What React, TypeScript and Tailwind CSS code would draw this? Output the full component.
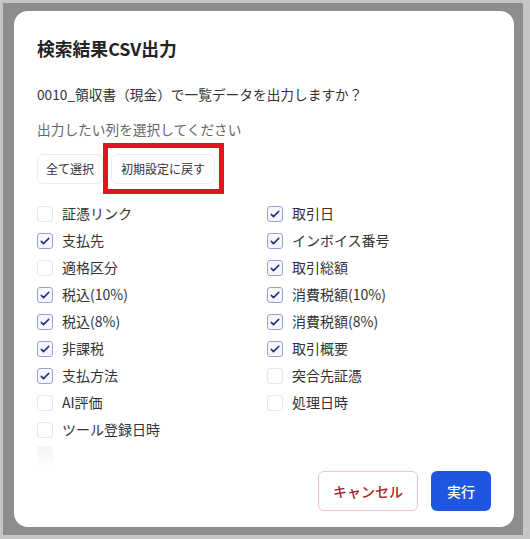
import React, { useState } from 'react';

interface ColumnOption {
  key: string;
  label: string;
  defaultOn: boolean;
}

const LEFT: ColumnOption[] = [
  { key: 'voucher', label: '証憑リンク', defaultOn: false },
  { key: 'payee', label: '支払先', defaultOn: true },
  { key: 'qualified', label: '適格区分', defaultOn: false },
  { key: 'tax10', label: '税込(10%)', defaultOn: true },
  { key: 'tax8', label: '税込(8%)', defaultOn: true },
  { key: 'nontax', label: '非課税', defaultOn: true },
  { key: 'method', label: '支払方法', defaultOn: true },
  { key: 'ai', label: 'AI評価', defaultOn: false },
  { key: 'registered', label: 'ツール登録日時', defaultOn: false },
];

const RIGHT: ColumnOption[] = [
  { key: 'date', label: '取引日', defaultOn: true },
  { key: 'invoice', label: 'インボイス番号', defaultOn: true },
  { key: 'total', label: '取引総額', defaultOn: true },
  { key: 'ctax10', label: '消費税額(10%)', defaultOn: true },
  { key: 'ctax8', label: '消費税額(8%)', defaultOn: true },
  { key: 'summary', label: '取引概要', defaultOn: true },
  { key: 'matched', label: '突合先証憑', defaultOn: false },
  { key: 'processed', label: '処理日時', defaultOn: false },
];

const defaults = (): Record<string, boolean> => {
  const result: Record<string, boolean> = {};
  [...LEFT, ...RIGHT].forEach((o) => {
    result[o.key] = o.defaultOn;
  });
  return result;
};

const CheckRow: React.FC<{ option: ColumnOption; checked: boolean; onToggle: () => void }> = ({
  option,
  checked,
  onToggle,
}) => (
  <label className="flex items-center gap-[9px] h-[27px] cursor-pointer select-none">
    <input type="checkbox" checked={checked} onChange={onToggle} className="sr-only" />
    <span
      className={
        checked
          ? 'w-4 h-4 rounded-[3px] border border-[#9aa0d6] bg-[#f5f6ff] flex items-center justify-center'
          : 'w-4 h-4 rounded-[3px] border border-[#e6e6e6] bg-white'
      }
    >
      {checked && (
        <svg viewBox="0 0 16 16" className="w-3 h-3">
          <path d="M3 8.5l3 3 7-7" fill="none" stroke="#25306e" strokeWidth="2" strokeLinecap="round" strokeLinejoin="round" />
        </svg>
      )}
    </span>
    <span className="text-[14px] text-[#333]">{option.label}</span>
  </label>
);

export default function App() {
  const [selected, setSelected] = useState<Record<string, boolean>>(defaults);

  const toggle = (key: string) => setSelected({ ...selected, [key]: !selected[key] });

  const selectAll = () => {
    const all: Record<string, boolean> = {};
    [...LEFT, ...RIGHT].forEach((o) => {
      all[o.key] = true;
    });
    setSelected(all);
  };

  return (
    <div
      className="w-[530px] h-[539px] bg-[#c6c6c6] pt-[3px] pl-[3px] pr-[7px] pb-[4px]"
      style={{ fontFamily: '"Noto Sans CJK JP", "Noto Sans", sans-serif' }}
    >
      <div className="h-full bg-[#8d8d8d] pt-[8px] pl-[11px] pr-[9px] pb-[8px]">
        <div className="h-full bg-white rounded-[14px] px-[23px] pt-6 flex flex-col">
          <h2 className="text-[17.8px] leading-[27px] font-semibold text-[#222]">検索結果CSV出力</h2>
          <p className="mt-[22px] text-[13.7px] leading-[21px] text-[#333]">
            0010_領収書（現金）で一覧データを出力しますか？
          </p>
          <p className="mt-[14px] text-[13.7px] leading-[21px] text-[#666]">出力したい列を選択してください</p>

          <div className="mt-[14px] flex gap-2">
            <button
              type="button"
              onClick={selectAll}
              className="h-[30px] px-2 rounded-md border border-[#ececec] bg-white text-[12px] text-[#333]"
            >
              全て選択
            </button>
            <div className="relative">
              <button
                type="button"
                onClick={() => setSelected(defaults())}
                className="h-[30px] px-[9px] rounded-md border border-[#ececec] bg-white text-[12px] text-[#333]"
              >
                初期設定に戻す
              </button>
              <span className="absolute -left-[8px] -right-[9px] -top-[11px] -bottom-[10px] border-[5px] border-[#e5141d] pointer-events-none" />
            </div>
          </div>

          <div className="mt-[16px] grid grid-cols-2 gap-x-[6px]">
            <div className="flex flex-col">
              {LEFT.map((o) => (
                <CheckRow key={o.key} option={o} checked={selected[o.key]} onToggle={() => toggle(o.key)} />
              ))}
              <div className="h-[27px] flex items-center">
                <span className="w-4 h-[22px] rounded-[3px] bg-gradient-to-b from-[#f3f3f3] to-white" />
              </div>
            </div>
            <div className="flex flex-col">
              {RIGHT.map((o) => (
                <CheckRow key={o.key} option={o} checked={selected[o.key]} onToggle={() => toggle(o.key)} />
              ))}
            </div>
          </div>

          <div className="mt-[1px] flex justify-end gap-[13px]">
            <button
              type="button"
              className="h-10 w-[100px] rounded-md border border-[#f5c4c6] bg-white text-[14px] font-medium text-[#a3262b]"
            >
              キャンセル
            </button>
            <button
              type="button"
              className="h-10 w-[60px] rounded-md bg-[#1e56e0] text-[14px] font-medium text-white"
            >
              実行
            </button>
          </div>
        </div>
      </div>
    </div>
  );
}
